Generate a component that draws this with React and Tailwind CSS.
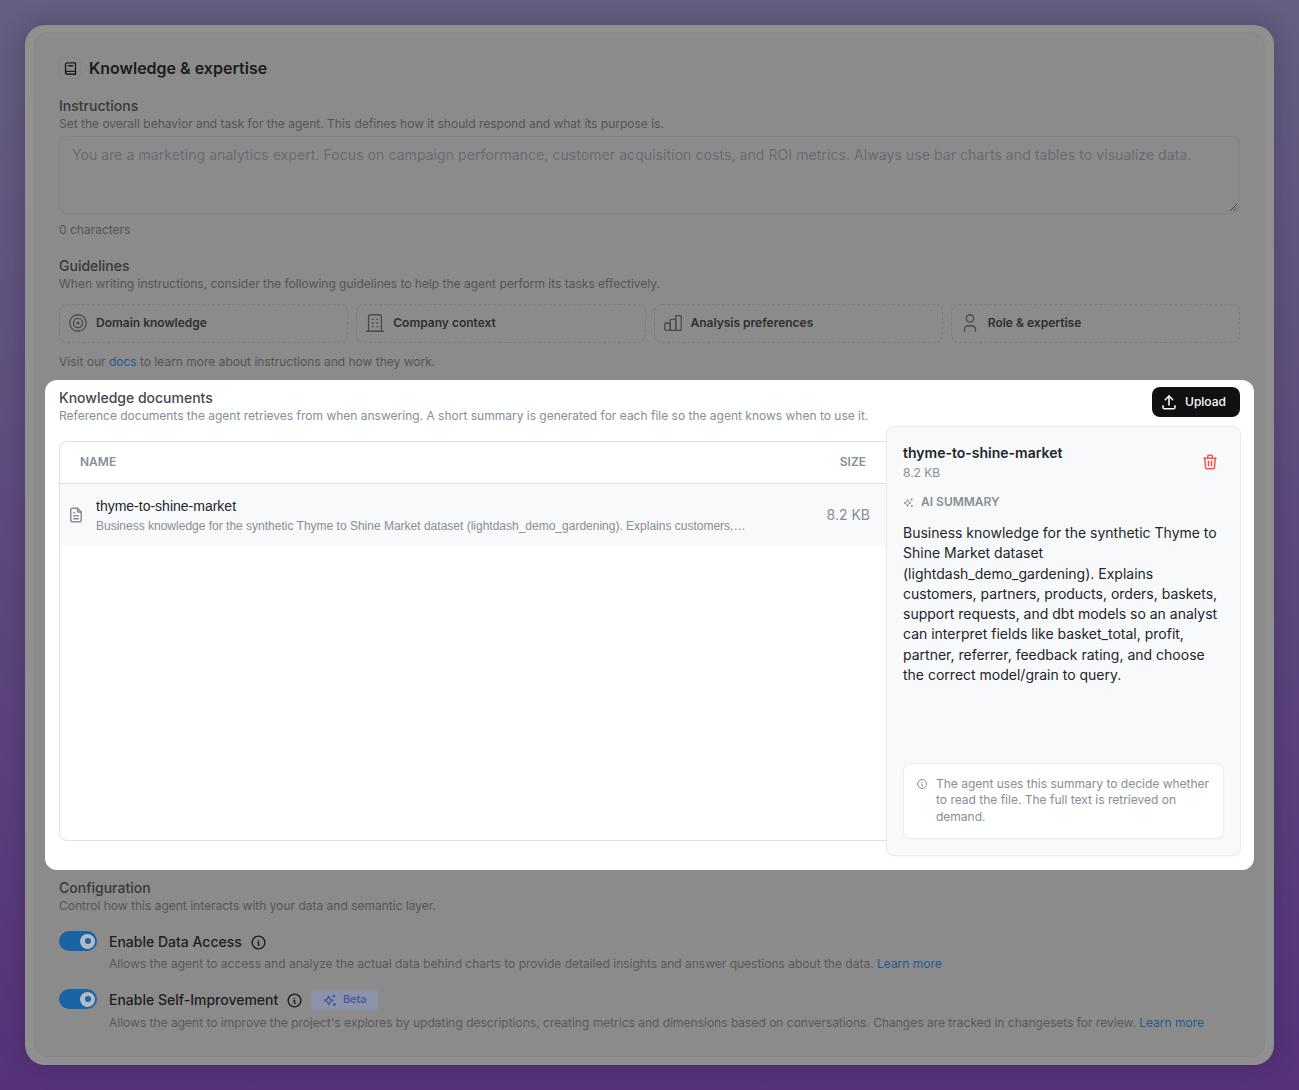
import React from 'react';
import { TbBook2, TbTarget, TbBuilding, TbUser, TbUpload, TbTrash, TbFileText, TbInfoCircle } from 'react-icons/tb';

const BarsIcon = ({ className }) => (
  <svg viewBox="0 0 24 24" fill="none" stroke="currentColor" strokeWidth="1.4" strokeLinejoin="round" className={className}>
    <rect x="3" y="12" width="6" height="8" rx="1" />
    <rect x="9" y="8" width="6" height="12" rx="1" />
    <rect x="15" y="4" width="6" height="16" rx="1" />
  </svg>
);

const guidelines = [
  { label: 'Domain knowledge', icon: TbTarget },
  { label: 'Company context', icon: TbBuilding },
  { label: 'Analysis preferences', icon: BarsIcon },
  { label: 'Role & expertise', icon: TbUser },
];

const Sparkle = ({ className }) => (
  <svg viewBox="0 0 16 16" fill="currentColor" className={className}>
    <path d="M6.5 3.5 8 7l3.5 1.5L8 10l-1.5 3.5L5 10 1.5 8.5 5 7z" fill="none" stroke="currentColor" strokeWidth="1.4" strokeLinejoin="round" />
    <circle cx="12.5" cy="3.5" r="1.5" />
    <circle cx="13" cy="13" r="1.5" />
  </svg>
);

const Toggle = () => (
  <div className="flex h-5 w-[38px] shrink-0 items-center justify-end rounded-full bg-[#1a64a5] p-[2px]">
    <div className="flex h-[15px] w-[15px] items-center justify-center rounded-full bg-[#b4bcc2]">
      <div className="h-[6px] w-[6px] rounded-full bg-[#1a64a5]" />
    </div>
  </div>
);

export default function App() {
  return (
    <div className="h-[1090px] overflow-hidden bg-gradient-to-b from-[#655f81] to-[#56327a] p-[25px] font-['Inter',sans-serif]">
      <div className="h-[1040px] rounded-[20px] bg-[#8f908f] px-[9px] py-[7px] shadow-[0_0_24px_rgba(30,20,50,0.3)]">
        <div className="h-[1025px] rounded-[14px] border border-[#868787] bg-[#8b8b8b] px-6 pt-[24px]">
          {/* Title */}
          <div className="flex h-[22px] items-center gap-2">
            <div className="flex h-[22px] w-[22px] items-center justify-center rounded-[5px] border border-[#848585]">
              <TbBook2 className="h-[17px] w-[17px] text-[#1e1e1e]" />
            </div>
            <h1 className="text-base font-semibold text-[#1c1c1c]">Knowledge &amp; expertise</h1>
          </div>

          {/* Instructions */}
          <div className="mt-[18px]">
            <p className="text-sm leading-[18px] font-medium text-[#383838]">Instructions</p>
            <p className="text-xs leading-[17px] text-[#555555]">Set the overall behavior and task for the agent. This defines how it should respond and what its purpose is.</p>
            <div className="relative mt-[4px] h-[78px] rounded-lg border border-[#828383] px-[12px] py-[8px] text-sm leading-[20px] tracking-[0.07px] text-[#686b71]">
              You are a marketing analytics expert. Focus on campaign performance, customer acquisition costs, and ROI metrics. Always use bar charts and tables to visualize data.
              <svg viewBox="0 0 10 10" className="absolute right-[1px] bottom-[1px] h-[9px] w-[9px] text-[#3d3d3d]">
                <path d="M1 9 9 1M5 9l4-4" stroke="currentColor" strokeWidth="1" fill="none" />
              </svg>
            </div>
            <p className="mt-[8px] text-xs leading-[16px] text-[#555555]">0 characters</p>
          </div>

          {/* Guidelines */}
          <div className="mt-[19px]">
            <p className="text-sm leading-[18px] font-medium text-[#383838]">Guidelines</p>
            <p className="text-xs leading-[17px] text-[#555555]">When writing instructions, consider the following guidelines to help the agent perform its tasks effectively.</p>
            <div className="mt-[12px] grid grid-cols-4 gap-2">
              {guidelines.map((g) => (
                <div key={g.label} className="flex h-[39px] items-center gap-[7px] rounded-lg border border-dashed border-[#7b7c7c] pb-[2px] pl-[7px]">
                  <g.icon className="h-[22px] w-[22px] text-[#4a4a4a]" strokeWidth={1.4} />
                  <span className="text-xs font-semibold text-[#2f2f2f]">{g.label}</span>
                </div>
              ))}
            </div>
            <p className="mt-[11px] text-xs leading-[16px] text-[#555555]">
              Visit our <span className="text-[#1f5a92]">docs</span> to learn more about instructions and how they work.
            </p>
          </div>

          {/* Knowledge documents */}
          <div className="-mx-[14px] mt-[10px] h-[490px] rounded-[12px] bg-white px-[14px] pt-[7px]">
            <div className="flex h-[39px] items-start justify-between">
              <div className="pt-[2px]">
                <p className="text-sm leading-[18px] font-medium text-[#44474c]">Knowledge documents</p>
                <p className="text-xs leading-[17px] text-[#868e96]">Reference documents the agent retrieves from when answering. A short summary is generated for each file so the agent knows when to use it.</p>
              </div>
              <button className="flex h-[30px] w-[88px] items-center gap-[7px] rounded-lg bg-[#111111] pl-[8px] text-xs font-medium text-white">
                <TbUpload className="h-[18px] w-[18px]" />
                Upload
              </button>
            </div>
            <div className="-mr-px flex items-start">
              <div className="mt-[15px] h-[400px] flex-1 overflow-hidden rounded-l-lg border border-r-0 border-[#dee2e6]">
                <div className="flex h-[42px] items-center justify-between border-b border-[#dee2e6] px-[20px] pb-[2px] text-xs font-semibold text-[#868e96]">
                  <span>NAME</span>
                  <span>SIZE</span>
                </div>
                <div className="flex h-[62px] items-center bg-[#f8f9fa] pr-[16px] pl-[7px]">
                  <TbFileText className="h-[18px] w-[18px] shrink-0 text-[#868e96]" />
                  <div className="ml-[11px] min-w-0 flex-1 font-['Liberation_Sans',sans-serif]">
                    <p className="text-sm leading-[20px] text-[#212529]">thyme-to-shine-market</p>
                    <p className="mt-[1px] w-[650px] truncate text-xs leading-[18px] text-[#868e96]">Business knowledge for the synthetic Thyme to Shine Market dataset (lightdash_demo_gardening). Explains customers, partners, products</p>
                  </div>
                  <span className="text-sm text-[#868e96]">8.2 KB</span>
                </div>
              </div>
              <div className="flex h-[430px] w-[355px] shrink-0 flex-col rounded-lg border border-[#e9ecef] bg-[#f8f9fa] p-4 shadow-[0_1px_2px_rgba(0,0,0,0.03)]">
                <div className="flex items-start justify-between">
                  <div>
                    <p className="text-sm leading-[20px] font-semibold text-[#212529]">thyme-to-shine-market</p>
                    <p className="text-xs leading-[20px] text-[#868e96]">8.2 KB</p>
                  </div>
                  <TbTrash className="mt-[10px] mr-[5px] h-[18px] w-[18px] text-[#fa5252]" />
                </div>
                <div className="mt-[11px] flex items-center gap-[7px] text-xs font-semibold text-[#868e96]">
                  <Sparkle className="h-[11px] w-[11px]" />
                  AI SUMMARY
                </div>
                <p className="mt-[13px] text-sm leading-[20.3px] text-[#212529]">
                  Business knowledge for the synthetic Thyme to Shine Market dataset (lightdash_demo_gardening). Explains customers, partners, products, orders, baskets, support requests, and dbt models so an analyst can interpret fields like basket_total, profit, partner, referrer, feedback rating, and choose the correct model/grain to query.
                </p>
                <div className="mt-auto flex gap-[8px] rounded-lg border border-[#eceef0] bg-white pt-[12px] pr-[10px] pb-[13px] pl-[12px] shadow-[0_1px_2px_rgba(0,0,0,0.03)]">
                  <TbInfoCircle className="mt-[2px] h-[12px] w-[12px] shrink-0 text-[#868e96]" />
                  <p className="text-xs leading-[16.5px] text-[#868e96]">The agent uses this summary to decide whether to read the file. The full text is retrieved on demand.</p>
                </div>
              </div>
            </div>
          </div>

          {/* Configuration */}
          <div className="mt-[9px]">
            <p className="text-sm leading-[18px] font-medium text-[#383838]">Configuration</p>
            <p className="text-xs leading-[17px] text-[#555555]">Control how this agent interacts with your data and semantic layer.</p>
            <div className="mt-[17px] flex gap-3">
              <Toggle />
              <div>
                <div className="flex h-[22px] items-center gap-[8px] text-sm font-medium text-[#1e1e1e]">
                  Enable Data Access
                  <TbInfoCircle className="h-[17px] w-[17px]" />
                </div>
                <p className="mt-[2px] text-xs leading-[18px] text-[#595959]">
                  Allows the agent to access and analyze the actual data behind charts to provide detailed insights and answer questions about the data. <span className="text-[#1f5a92]">Learn more</span>
                </p>
              </div>
            </div>
            <div className="mt-[16px] flex gap-3">
              <Toggle />
              <div>
                <div className="flex h-[22px] items-center gap-[8px] text-sm font-medium text-[#1e1e1e]">
                  Enable Self-Improvement
                  <TbInfoCircle className="h-[17px] w-[17px]" />
                  <span className="flex h-5 w-[67px] items-center justify-center gap-[6px] rounded-[3px] bg-[#8b92a9] text-[11px] font-medium text-[#4453a6]">
                    <Sparkle className="h-[14px] w-[14px]" />
                    Beta
                  </span>
                </div>
                <p className="mt-[3px] text-xs leading-[18px] text-[#595959]">
                  Allows the agent to improve the project's explores by updating descriptions, creating metrics and dimensions based on conversations. Changes are tracked in changesets for review. <span className="text-[#1f5a92]">Learn more</span>
                </p>
              </div>
            </div>
          </div>
        </div>
      </div>
    </div>
  );
}
